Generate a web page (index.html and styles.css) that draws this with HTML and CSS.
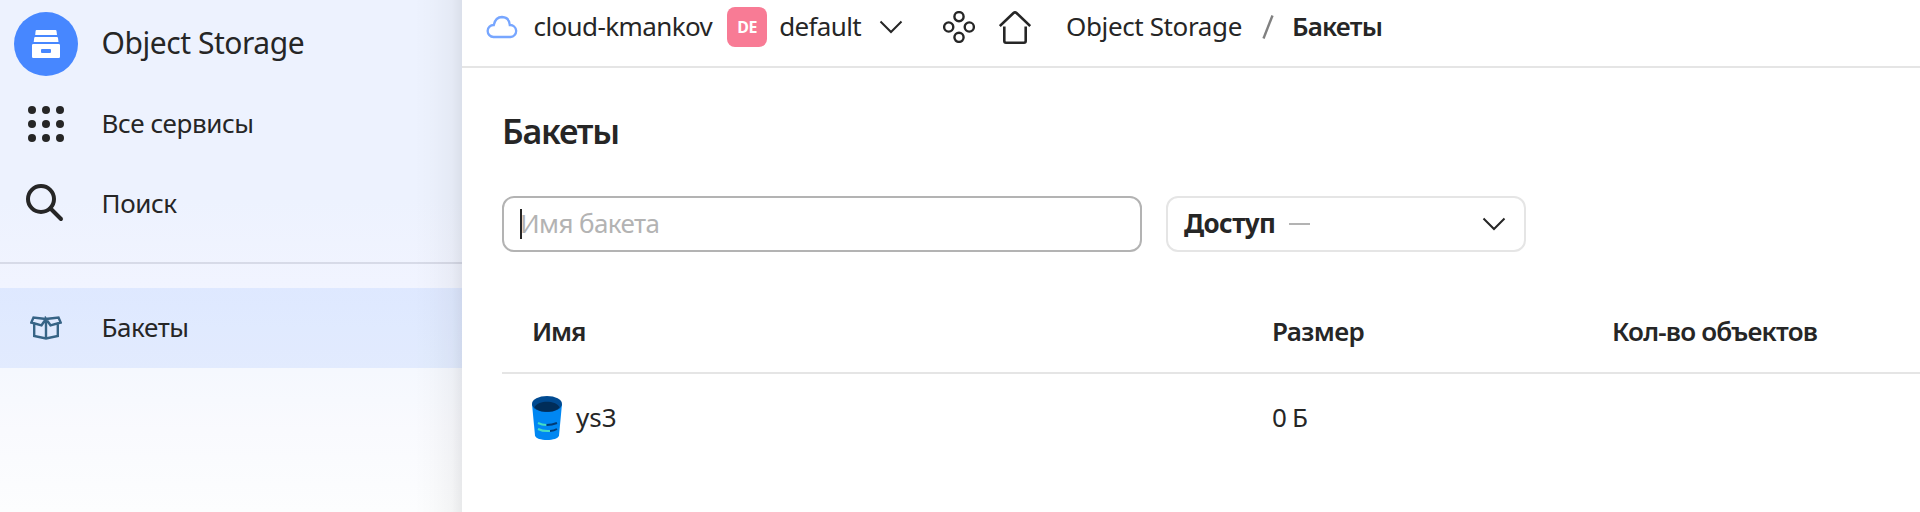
FILE: index.html
```
<!DOCTYPE html>
<html lang="ru">
<head>
<meta charset="utf-8">
<title>Object Storage</title>
<link rel="stylesheet" href="styles.css">
</head>
<body>
<div class="app">
  <aside class="sidebar">
    <div class="row">
      <span class="logo">
        <svg width="28" height="28" viewBox="0 0 28 28"><path fill="#fff" d="M4.500 0H23.500a1 1 0 0 1 1 .9L25 5H3.200l.4-4.100a1 1 0 0 1 .9-.9zM3.200 7H25a1 1 0 0 1 1 .9l.5 4.100H1.700L2.200 7.900a1 1 0 0 1 1-.9zM1.300 14H26.700A1.300 1.300 0 0 1 28 15.300V26.700A1.300 1.300 0 0 1 26.700 28H1.300A1.300 1.300 0 0 1 0 26.700V15.300A1.300 1.300 0 0 1 1.300 14zM10 19a1 1 0 0 0-1 1v2a1 1 0 0 0 1 1h8a1 1 0 0 0 1-1v-2a1 1 0 0 0-1-1z"/></svg>
      </span>
      <span class="label title">Object Storage</span>
    </div>
    <div class="row">
      <span class="slot"><svg width="36" height="36" viewBox="0 0 36 36" fill="#262626"><circle cx="4" cy="4" r="4"/><circle cx="18" cy="4" r="4"/><circle cx="32" cy="4" r="4"/><circle cx="4" cy="18" r="4"/><circle cx="18" cy="18" r="4"/><circle cx="32" cy="18" r="4"/><circle cx="4" cy="32" r="4"/><circle cx="18" cy="32" r="4"/><circle cx="32" cy="32" r="4"/></svg></span>
      <span class="label services">Все сервисы</span>
    </div>
    <div class="row">
      <span class="slot"><svg width="40" height="40" viewBox="0 0 40 40" fill="none" stroke="#262626" stroke-width="4" stroke-linecap="round"><circle cx="15" cy="15" r="13"/><path d="M24.500 24.500L35 35"/></svg></span>
      <span class="label search">Поиск</span>
    </div>
    <div class="divider"></div>
    <div class="row active">
      <span class="slot"><svg width="32" height="24" viewBox="0 0 32 24" fill="none" stroke="#376486" stroke-width="2.400"><path d="M16 3L3.500 1.500L1.300 6.500L11.500 9.300L16 3L28.500 1.500L30.700 6.500L20.500 9.300L16 3V22M4.200 8V20L16 22.500L27.800 20V8"/></svg></span>
      <span class="label buckets">Бакеты</span>
    </div>
  </aside>
  <main class="main">
    <header class="topbar">
      <svg class="cloud" width="32" height="24" viewBox="0 0 32 24" fill="none" stroke="#77a6ff" stroke-width="2.300"><path d="M7.500 22A6 6 0 0 1 7.800 10Q9.500 2 16 2Q23.300 2.300 23.800 10A6 6 0 0 1 24.500 22Z"/></svg>
      <span class="crumb cloud-name">cloud-kmankov</span>
      <span class="badge"><b>DE</b></span>
      <span class="crumb folder">default</span>
      <svg class="chevron" width="24" height="14" viewBox="0 0 24 14" fill="none" stroke="#262626" stroke-width="2"><path d="M1.500 1.500L12 12L22.500 1.500"/></svg>
      <svg class="dots" width="32" height="32" viewBox="0 0 32 32" fill="none" stroke="#262626" stroke-width="2.400"><circle cx="16" cy="5.700" r="4.600"/><circle cx="5.700" cy="16" r="4.600"/><circle cx="26.300" cy="16" r="4.600"/><circle cx="16" cy="26.300" r="4.600"/></svg>
      <svg class="home" width="32" height="33" viewBox="0 0 32 33" fill="none" stroke="#262626" stroke-width="2.600"><path d="M.8 15L14.500 2Q16 .7 17.500 2L31.200 15M5.300 15.500V30Q5.300 31.700 7 31.700H25Q26.700 31.700 26.700 30V15.500"/></svg>
      <span class="crumb service">Object Storage</span>
      <svg class="slash" width="12" height="24" viewBox="0 0 12 24"><path d="M10.500 .5L1.500 23.500" stroke="#808080" stroke-width="2.400"/></svg>
      <b class="crumb current">Бакеты</b>
    </header>
    <section class="content">
      <h1 class="heading">Бакеты</h1>
      <div class="filters">
        <div class="field"><i class="caret"></i><span class="placeholder">Имя бакета</span></div>
        <div class="select"><b class="access">Доступ</b><i class="dash"></i><svg class="arrow" width="24" height="14" viewBox="0 0 24 14" fill="none" stroke="#262626" stroke-width="2"><path d="M1.500 1.500L12 12L22.500 1.500"/></svg></div>
      </div>
      <div class="table">
        <div class="line head"><div class="cell"><span class="h-name">Имя</span></div><div class="cell"><span class="h-size">Размер</span></div><div class="cell"><span class="h-count">Кол-во объектов</span></div></div>
        <div class="line body"><div class="cell">
          <svg class="bucket" width="30" height="44" viewBox="0 0 30 44"><path fill="#0087f2" d="M0 8L3 39.500C4 45.500 26 45.500 27 39.500L30 8Z"/><ellipse cx="15" cy="8" rx="15" ry="8" fill="#004a91"/><path fill="#002d59" d="M2.300 11.200C7 4 23 4 27.700 11.200C23 17.300 7 17.300 2.300 11.200Z"/><path fill="none" stroke="#45dcc4" stroke-width="2" d="M6 27Q10 28.900 14.500 29M6 33Q11 35.500 18 35"/><path fill="none" stroke="#003b75" stroke-width="2" d="M14.500 29Q20 29 25 27M18 35Q22 34.700 25 33"/></svg>
          <span class="b-name">ys3</span></div><div class="cell"><span class="b-size">0 Б</span></div><div class="cell"></div></div>
      </div>
    </section>
  </main>
</div>
</body>
</html>
```
FILE: styles.css
```
* { box-sizing: border-box; }
body { margin: 0; background: #fff; color: #262626; font: 26px/34px "Noto Sans", sans-serif; }
svg { display: block; flex: none; }
.app { display: flex; height: 512px; overflow: hidden; }
.sidebar { flex: none; width: 462px; padding-top: 4px;
  background: linear-gradient(90deg, rgba(0,0,0,0) 414px, rgba(0,0,0,.012) 432px, rgba(0,0,0,.035) 452px, rgba(0,0,0,.08) 462px),
  linear-gradient(#edf2fe 0, #edf2fe 200px, #f1f4ff 285px, #f5f8fe 370px, #f9fafe 430px, #fcfdfe 512px); }
.row { display: flex; align-items: center; height: 80px; padding-left: 14px; gap: 24px; }
.logo, .slot { flex: none; display: flex; align-items: center; justify-content: center; width: 64px; height: 64px; }
.logo { border-radius: 50%; background: #4787ff; }
.label { margin: -2px 0 0 -.5px; white-space: nowrap; letter-spacing: -.4px; }
.title { font-size: 30px; line-height: 40px; letter-spacing: -.45px; }
.divider { margin: 18px 0 24px; height: 2px; background: rgba(0,0,30,.1); }
.active { background: rgba(70,135,255,.11); }
.main { flex: 1; min-width: 0; }
.topbar { display: flex; align-items: center; height: 68px; padding: 0 0 12px 24px; border-bottom: 2px solid #e5e5e5; }
.crumb { margin-top: -2px; white-space: nowrap; }
.cloud-name { margin-left: 15.5px; letter-spacing: -.6px; }
.badge { margin-left: 15px; display: flex; align-items: center; justify-content: center; width: 40px; height: 40px; border-radius: 8px; background: #f87b95; color: #fff; font-size: 16px; letter-spacing: -.3px; }
.folder { margin-left: 12px; letter-spacing: -.65px; }
.chevron { margin-left: 17.5px; }
.dots { margin-left: 40px; }
.home { margin-left: 24px; }
.service { margin-left: 35.5px; letter-spacing: -.37px; }
.slash { margin-left: 20px; }
.current { margin-left: 18px; font-weight: 600; letter-spacing: -.8px; }
.content { padding: 40px 0 0 40px; }
.heading { margin: 0; font-size: 34px; line-height: 46px; font-weight: 600; letter-spacing: -1.2px; }
.filters { display: flex; gap: 24px; margin-top: 42px; }
.field, .select { display: flex; align-items: center; height: 56px; border: 2px solid #b3b3b3; border-radius: 12px; }
.field { width: 640px; padding-left: 16px; }
.caret { width: 2px; height: 30px; background: #262626; }
.placeholder { color: #b3b3b3; margin: -2px 0 0 -2px; letter-spacing: -.6px; }
.select { width: 360px; border-color: #e5e5e5; padding: 0 18px 0 16px; }
.access { font-weight: 700; margin-top: -2px; letter-spacing: -.6px; }
.dash { width: 21px; height: 2px; background: #b3b3b3; margin-left: 14px; }
.arrow { margin-left: auto; }
.table { margin-top: 40px; }
.line { display: grid; grid-template-columns: 740px 340px 1fr; align-items: center; }
.cell { display: flex; align-items: center; padding-left: 30px; gap: 14px; }
.cell span { margin-top: -2px; }
.head { height: 82px; font-weight: 600; border-bottom: 2px solid #e5e5e5; }
.h-name { letter-spacing: -1.2px; }
.h-size { letter-spacing: -.6px; }
.h-count { letter-spacing: -.78px; }
.b-size { letter-spacing: -.8px; }
.body { height: 88px; }
```
